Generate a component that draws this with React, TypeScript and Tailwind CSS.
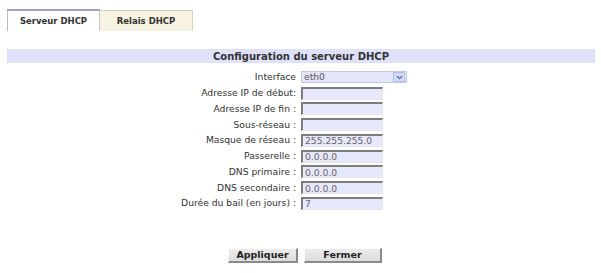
import { ChevronDown } from 'lucide-react';

const FIELDS = [
  { label: 'Adresse IP de début:', value: '' },
  { label: 'Adresse IP de fin :', value: '' },
  { label: 'Sous-réseau :', value: '' },
  { label: 'Masque de réseau :', value: '255.255.255.0' },
  { label: 'Passerelle :', value: '0.0.0.0' },
  { label: 'DNS primaire :', value: '0.0.0.0' },
  { label: 'DNS secondaire :', value: '0.0.0.0' },
  { label: 'Durée du bail (en jours) :', value: '7' },
];

const App = () => {
  return (
    <div className="w-[601px] h-[273px] bg-white text-[#333] font-['DejaVu_Sans',sans-serif] text-[9.2px] overflow-hidden">
      {/* Tabs */}
      <div className="flex items-end pl-[7px] pt-[9px] h-[31px]">
        <div className="w-[93px] h-[22px] flex items-center justify-center bg-white border-t-2 border-l border-r border-t-[#9aa3cc] border-l-[#b5bbd8] border-r-[#c8c8c8] font-bold text-[8.5px] text-[#333]">
          Serveur DHCP
        </div>
        <div className="w-[93px] h-[21px] flex items-center justify-center bg-[#f7f2e2] border-t border-r border-[#d8d2bd] font-bold text-[8.5px] text-[#333]">
          Relais DHCP
        </div>
      </div>

      {/* Header band */}
      <div className="mt-[18px] ml-[7px] mr-[6px] h-[14px] bg-[#dfe1fb] flex items-center justify-center font-bold text-[10px] text-[#333]">
        Configuration du serveur DHCP
      </div>

      {/* Form */}
      <div className="mt-[8px] pl-[176px] flex flex-col gap-[3px]">
        <div className="flex items-center h-[12.75px]">
          <span className="w-[125px] text-right pr-[5px] whitespace-nowrap">Interface</span>
          <div className="w-[106px] h-[12px] bg-[#e3e5fb] border border-[#c3c8e6] flex items-center justify-between pl-[2px]">
            <span className="text-[#555]">eth0</span>
            <span className="w-[12px] h-[10px] mr-[1px] bg-[#d3dbf8] border border-[#b3bde8] flex items-center justify-center">
              <ChevronDown size={9} strokeWidth={3.5} className="text-[#4d5fa8]" />
            </span>
          </div>
        </div>
        {FIELDS.map((f) => (
          <div key={f.label} className="flex items-center h-[12.75px]">
            <span className="w-[125px] text-right pr-[5px] whitespace-nowrap">{f.label}</span>
            <div className="w-[82px] h-[13px] bg-[#e6e8fc] border-t-2 border-l-2 border-b border-r border-t-[#7d7d7d] border-l-[#7d7d7d] border-b-[#e6e6e6] border-r-[#e6e6e6] flex items-center pl-[2px] text-[#666] leading-none">
              {f.value}
            </div>
          </div>
        ))}
      </div>

      {/* Buttons */}
      <div className="mt-[38px] pl-[228px] flex gap-[6px]">
        <button className="w-[70px] h-[15px] bg-gradient-to-b from-[#ececec] to-[#dcdcdc] border-r-2 border-b-2 border-t border-l border-r-[#8a8a8a] border-b-[#8a8a8a] border-t-white border-l-white font-bold text-[9.5px] text-[#222] leading-none">
          Appliquer
        </button>
        <button className="w-[78px] h-[15px] bg-gradient-to-b from-[#ececec] to-[#dcdcdc] border-r-2 border-b-2 border-t border-l border-r-[#8a8a8a] border-b-[#8a8a8a] border-t-white border-l-white font-bold text-[9.5px] text-[#222] leading-none">
          Fermer
        </button>
      </div>
    </div>
  );
};

export default App;
